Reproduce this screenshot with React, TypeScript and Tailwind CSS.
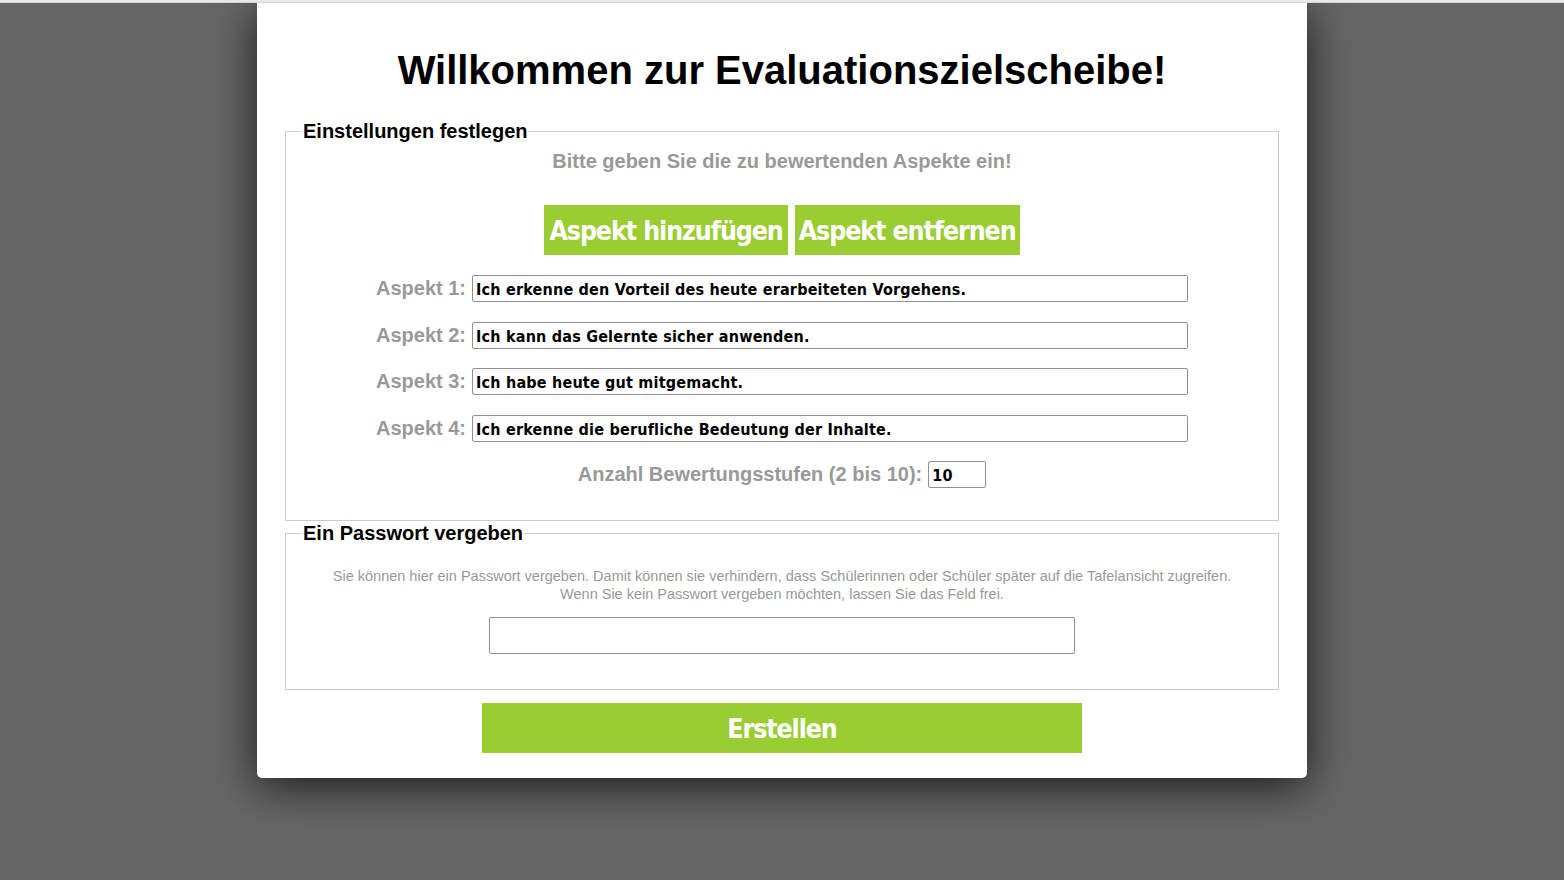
import React from "react";

const aspects = [
  "Ich erkenne den Vorteil des heute erarbeiteten Vorgehens.",
  "Ich kann das Gelernte sicher anwenden.",
  "Ich habe heute gut mitgemacht.",
  "Ich erkenne die berufliche Bedeutung der Inhalte.",
];

export default function App() {
  return (
    <div className="min-h-screen bg-[#666666] font-['Liberation_Sans',Arial,sans-serif]">
      <div className="relative z-10 h-[3px] w-full bg-[#e8e8eb] border-b border-[#d6d6da]" />
      <div className="mx-auto flex w-[1050px] flex-col items-center rounded-b-[5px] bg-white px-[28px] pb-[25px] pt-[44px] shadow-[0_8px_45px_rgba(0,0,0,0.75)]">
        <h1 className="text-[40px] font-bold leading-[46px] text-black">
          Willkommen zur Evaluationszielscheibe!
        </h1>

        <fieldset className="mt-[27px] w-full border border-[#cccccc] px-4 pb-[32px] pt-[7px]">
          <legend className="px-[1px] text-[20px] font-bold leading-[23px] text-black">
            Einstellungen festlegen
          </legend>
          <div className="flex flex-col items-center">
            <p className="text-[20px] font-bold leading-[23px] text-[#999999]">
              Bitte geben Sie die zu bewertenden Aspekte ein!
            </p>
            <div className="mt-[32px] flex gap-[7px]">
              <button className="h-[50px] bg-[#9acd32] px-[5px] pt-[1px] font-['DejaVu_Sans',sans-serif] text-[26.5px] font-bold tracking-[-1.1px] text-white [font-stretch:condensed]">
                Aspekt hinzufügen
              </button>
              <button className="h-[50px] bg-[#9acd32] px-[4px] pt-[1px] font-['DejaVu_Sans',sans-serif] text-[26.5px] font-bold tracking-[-1.1px] text-white [font-stretch:condensed]">
                Aspekt entfernen
              </button>
            </div>
            <div className="mt-[20px] flex flex-col gap-[19.5px]">
              {aspects.map((a, i) => (
                <div key={i} className="flex items-center gap-[6px]">
                  <span className="text-[20px] font-bold leading-[23px] text-[#999999]">
                    Aspekt {i + 1}:
                  </span>
                  <div className="flex h-[27px] w-[716px] items-center rounded-[2px] border border-[#8f8f9d] px-[3px] pt-[3px] font-['DejaVu_Sans',sans-serif] text-[16px] font-bold tracking-[0.2px] text-black [font-stretch:condensed]">
                    {a}
                  </div>
                </div>
              ))}
              <div className="flex items-center justify-center gap-[6px]">
                <span className="text-[20px] font-bold leading-[23px] text-[#999999]">
                  Anzahl Bewertungsstufen (2 bis 10):
                </span>
                <div className="flex h-[27px] w-[58px] items-center rounded-[2px] border border-[#8f8f9d] px-[3px] pt-[3px] font-['DejaVu_Sans',sans-serif] text-[16px] font-bold tracking-[0.2px] text-black [font-stretch:condensed]">
                  10
                </div>
              </div>
            </div>
          </div>
        </fieldset>

        <fieldset className="mt-[1px] w-full border border-[#cccccc] px-4 pb-[35px] pt-[22px]">
          <legend className="px-[1px] text-[20px] font-bold leading-[23px] text-black">
            Ein Passwort vergeben
          </legend>
          <div className="flex flex-col items-center">
            <p className="text-center text-[14.5px] leading-[18px] text-[#999999]">
              Sie können hier ein Passwort vergeben. Damit können sie verhindern, dass Schülerinnen oder Schüler später auf die Tafelansicht zugreifen.
              <br />
              Wenn Sie kein Passwort vergeben möchten, lassen Sie das Feld frei.
            </p>
            <div className="mt-[14px] h-[37px] w-[586px] rounded-[2px] border border-[#8f8f9d]" />
          </div>
        </fieldset>

        <button className="mt-[13px] h-[50px] w-[600px] bg-[#9acd32] pt-[1px] font-['DejaVu_Sans',sans-serif] text-[26.5px] font-bold tracking-[-1.1px] text-white [font-stretch:condensed]">
          Erstellen
        </button>
      </div>
    </div>
  );
}
